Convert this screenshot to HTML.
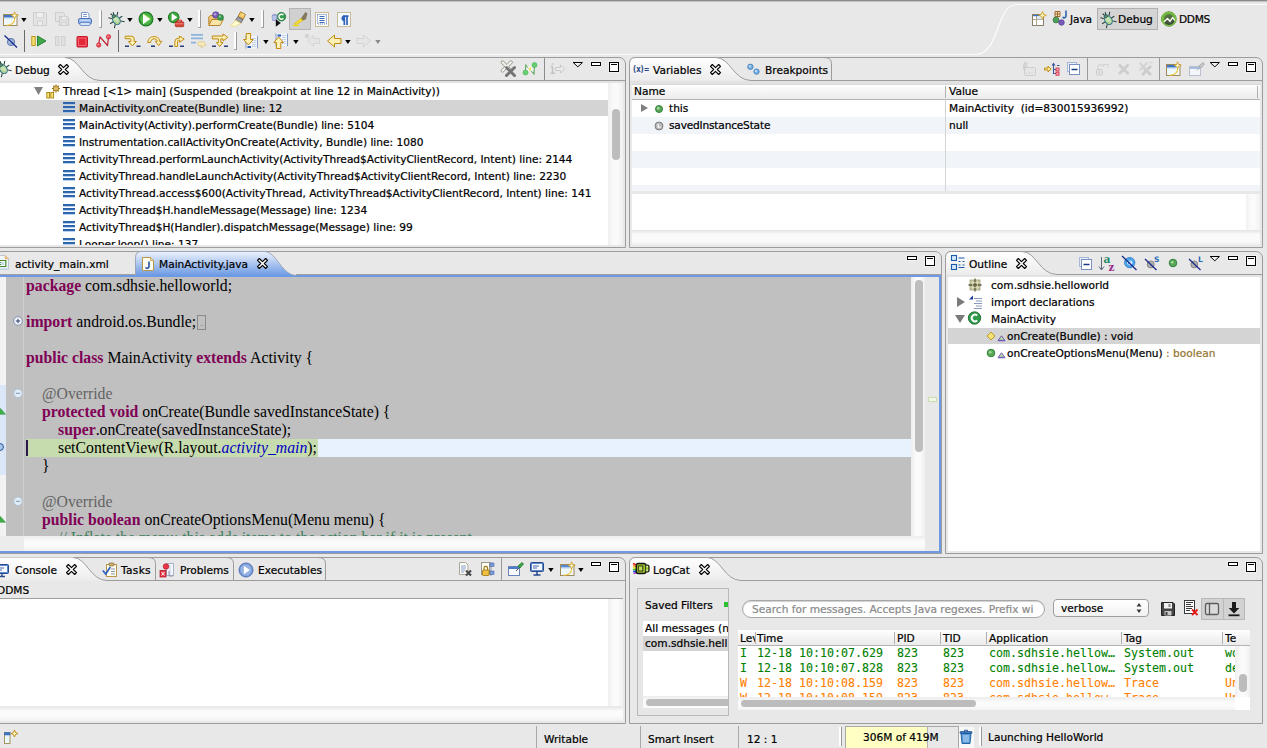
<!DOCTYPE html>
<html><head><meta charset="utf-8"><title>Debug - HelloWorld/src/com/sdhsie/helloworld/MainActivity.java - Eclipse</title>
<style>
*{box-sizing:border-box;margin:0;padding:0}
html,body{width:1267px;height:748px;overflow:hidden;background:#e8e8e8}
body{position:relative;font-family:"DejaVu Sans","Liberation Sans",sans-serif;font-size:10.6px;color:#000;line-height:17px;-webkit-text-stroke:.22px currentColor}
.p{position:absolute;border:1px solid #9c9c9c;background:#e8e8e8;border-radius:7px 7px 0 0}
.t{position:absolute;white-space:nowrap}
.ic{position:absolute;width:16px;height:16px;overflow:visible}
svg{position:absolute;overflow:visible}
.code{font-family:"Liberation Serif",serif;font-size:15.75px;line-height:18px;-webkit-text-stroke:0}
.code b{color:#7f0055}
.mono{font-family:"DejaVu Sans Mono","Liberation Mono",monospace;font-size:11.63px;line-height:15px;-webkit-text-stroke:.1px currentColor}
.hl{position:absolute;height:1px;background:#a8a8a8}
.vl{position:absolute;width:1px;background:#a8a8a8}
.g{color:#007f00}.o{color:#ff7f00}
</style></head><body>

<div class="t" style="left:0px;top:0px;width:1267px;height:1px;background:#8a8a8a"></div>
<div class="t" style="left:0px;top:1px;width:1267px;height:1px;background:#c4c4c4"></div>
<svg class="ic" style="left:3px;top:11px" viewBox="0 0 16 16" ><rect x=".5" y="3.500" width="13.500" height="11" fill="#eef8fd" stroke="#a08a58"/><rect x="1" y="4" width="9.500" height="2.400" fill="#3f74c4"/><path d="M1 6.900h9" stroke="#8ab0e8" stroke-width=".8"/><path d="M11.600 7.500C11.600 12 8 14 3.500 14.200" stroke="#f0c840" fill="none" stroke-width="1.100"/><path d="M11.600 .8l1 2.600 2.600 1-2.600 1-1 2.600-1-2.600-2.600-1 2.600-1z" fill="#fff8d0" stroke="#c89a18" stroke-width=".8" stroke-linejoin="round"/></svg>
<svg style="left:21px;top:18px;width:6px;height:4px" viewBox="0 0 6 4"><path d="M.2 0h5.400L2.900 3.900z" fill="#000"/></svg>
<svg class="ic" style="left:32px;top:11px" viewBox="0 0 16 16" ><path d="M1.500 1.500h12l1 1v12h-13z" fill="#e4e4e4" stroke="#cdcdcd"/><rect x="4.500" y="1.500" width="7" height="5.500" fill="#efefef" stroke="#d2d2d2"/><rect x="5.500" y="10" width="5" height="4.500" fill="#ececec" stroke="#d2d2d2"/></svg>
<svg class="ic" style="left:54px;top:11px" viewBox="0 0 16 16" ><path d="M1.500 1.500h8l1 1v8h-9z" fill="#e4e4e4" stroke="#cdcdcd"/><path d="M5.500 5.500h8l1 1v8h-9z" fill="#e2e2e2" stroke="#c9c9c9"/><rect x="7.500" y="5.500" width="5" height="3.500" fill="#eee" stroke="#d2d2d2"/><rect x="8" y="11.500" width="4" height="3" fill="#ececec" stroke="#d2d2d2"/></svg>
<svg class="ic" style="left:77px;top:11px" viewBox="0 0 16 16" ><path d="M4.500 1.500h6l1.500 1.500v4.500h-7.500z" fill="#fff" stroke="#7d98c8"/><path d="M6 3.500h4M6 5.500h4" stroke="#6f8fc8" stroke-width=".9"/><rect x="1.500" y="7.500" width="13" height="5.500" rx="1.500" fill="#8fb2e8" stroke="#4a72b8"/><rect x="3" y="11.500" width="10" height="3" rx=".8" fill="#d6e2f6" stroke="#5a80c0" stroke-width=".8"/><rect x="2.500" y="8.500" width="11" height="1.500" fill="#c4d7f4"/></svg>
<div class="t" style="left:99px;top:10px;width:3px;height:18px;background:#fdfdfd;border-right:1px solid #9a9a9a;border-bottom:1px solid #9a9a9a;border-radius:1px"></div>
<svg class="ic" style="left:108px;top:11px" viewBox="0 0 16 16" ><g transform="rotate(-32 8 8.500)"><path d="M2.500 3l3 3.200M13.500 3l-3 3.200M.8 9h3.500M11.700 9h3.500M2 15l3-3M14 15l-3-3M6.500 .8l1 2.700M9.500 .8l-1 2.700" stroke="#1c3a34" stroke-width="1" fill="none"/><ellipse cx="8" cy="9.300" rx="3.500" ry="4.600" fill="#b2d69a" stroke="#2a6a84" stroke-width="1"/><path d="M6 7.500l3.500 4M7.500 6.500l2.500 3" stroke="#d8ecc8" stroke-width=".9"/><ellipse cx="8" cy="4.600" rx="2" ry="1.400" fill="#5a8a70" stroke="#2a5a64" stroke-width=".7"/></g></svg>
<svg style="left:127px;top:18px;width:6px;height:4px" viewBox="0 0 6 4"><path d="M.2 0h5.400L2.900 3.900z" fill="#000"/></svg>
<svg class="ic" style="left:138px;top:11px" viewBox="0 0 16 16" ><circle cx="8" cy="8" r="6.900" fill="#3fa83f" stroke="#1f7a24" stroke-width="1.200"/><circle cx="8" cy="8" r="5" fill="#5cbf50" opacity=".7"/><path d="M5 2.800l7.300 5.200-7.300 5.200z" fill="#fff"/><path d="M5 2.800l7.300 5.200" stroke="#b8f060" stroke-width=".8"/></svg>
<svg style="left:157px;top:18px;width:6px;height:4px" viewBox="0 0 6 4"><path d="M.2 0h5.400L2.900 3.900z" fill="#000"/></svg>
<svg class="ic" style="left:168px;top:11px" viewBox="0 0 16 16" ><circle cx="5.700" cy="6.300" r="5.300" fill="#3fa83f" stroke="#1f7a24" stroke-width="1.100"/><path d="M3.600 2.300l5.800 4-5.800 4z" fill="#fff"/><rect x="7.300" y="10.800" width="8.400" height="4.900" rx=".9" fill="#d84434" stroke="#b02a20" stroke-width=".8"/><path d="M9.500 10.800v-1.500h4v1.500" fill="none" stroke="#c83a2c" stroke-width="1.100"/><path d="M7.500 12.800h8" stroke="#f0a098" stroke-width=".8"/></svg>
<svg style="left:187px;top:18px;width:6px;height:4px" viewBox="0 0 6 4"><path d="M.2 0h5.400L2.900 3.900z" fill="#000"/></svg>
<div class="t" style="left:198px;top:10px;width:3px;height:18px;background:#fdfdfd;border-right:1px solid #9a9a9a;border-bottom:1px solid #9a9a9a;border-radius:1px"></div>
<svg class="ic" style="left:208px;top:11px" viewBox="0 0 16 16" ><path d="M.8 13.500v-7.500l1.500-1.500h4l1.200 1.500h6v3" fill="#f0c878" stroke="#b07818" stroke-width=".9" stroke-linejoin="round"/><path d="M.8 14.500l3-6h11.500l-3.300 6z" fill="#fbe4a8" stroke="#b07818" stroke-width=".9" stroke-linejoin="round"/><circle cx="7.800" cy="4" r="3.300" fill="#7a5cb8" stroke="#56408c" stroke-width=".6"/><circle cx="7" cy="3.200" r="1.200" fill="#b4a0dc"/><circle cx="12.500" cy="6.400" r="3" fill="#3c9a52" stroke="#207034" stroke-width=".6"/><circle cx="11.800" cy="5.600" r="1" fill="#98d4a4"/></svg>
<svg class="ic" style="left:230px;top:11px" viewBox="0 0 16 16" ><path d="M10.500 .8l5 2.700-2.500 5-5-3z" fill="#f8c860" stroke="#9a6a18" stroke-width=".8" stroke-linejoin="round"/><path d="M12 2.500l1.800 1M11.300 3.800l1.800 1" stroke="#fff4c8" stroke-width=".7"/><path d="M8 5.500l5 3-2.200 3.800-5.300-3z" fill="#9a9aa0" stroke="#5c5c64" stroke-width=".8" stroke-linejoin="round"/><path d="M5.500 9.300l5.300 3-6.300 3.200-4-.5z" fill="#fffbd0" stroke="#e8d878" stroke-width=".7" stroke-linejoin="round"/></svg>
<svg style="left:249px;top:18px;width:6px;height:4px" viewBox="0 0 6 4"><path d="M.2 0h5.400L2.900 3.900z" fill="#000"/></svg>
<div class="t" style="left:261px;top:10px;width:3px;height:18px;background:#fdfdfd;border-right:1px solid #9a9a9a;border-bottom:1px solid #9a9a9a;border-radius:1px"></div>
<svg class="ic" style="left:271px;top:11px" viewBox="0 0 16 16" ><circle cx="10.400" cy="5.700" r="4.300" fill="#2f9a4a" stroke="#1a6a30" stroke-width=".7"/><path d="M12.400 4.100a2.500 2.500 0 1 0 0 3.200" fill="none" stroke="#fff" stroke-width="1.400"/><path d="M1 4.500h5l-.6 5h-3.800z" fill="#b8c4ec" stroke="#8090c8" stroke-width=".7"/><path d="M2 4.500v-1.200h3v1.200" fill="none" stroke="#8090c8" stroke-width=".8"/><path d="M4.800 8.300l5 3.700-5 3.800z" fill="#111"/></svg>
<div class="t" style="left:289px;top:8px;width:22px;height:22px;background:#d0d0d0;border:1px solid #b4b4b4"></div>
<svg class="ic" style="left:292px;top:11px" viewBox="0 0 16 16" ><path d="M13.500 1.500l1.500 1.200-1.500 5.300-3.500 1.500-1-1.500z" fill="#8a7a60" stroke="#6a5a48" stroke-width=".6"/><path d="M9 7.500l1.800 2-6.300 4-2.500-.5z" fill="#f8e030" stroke="#d8b800" stroke-width=".6"/><path d="M1 14.500h6" stroke="#f0d820" stroke-width="1.400"/></svg>
<svg class="ic" style="left:314px;top:11px" viewBox="0 0 16 16" ><rect x="1.500" y="1.500" width="13" height="14" fill="#fdfdf8" stroke="#c9bb98"/><rect x="3.500" y="3.500" width="9" height="9.500" fill="none" stroke="#3a68b8" stroke-width=".9" stroke-dasharray="1 1"/><path d="M5.500 5.500h5M5.500 7.500h5M5.500 9.500h5M5.500 11.500h5" stroke="#3a68b8" stroke-width="1.100"/></svg>
<svg class="ic" style="left:336px;top:11px" viewBox="0 0 16 16" ><rect x="1.500" y="1.500" width="13" height="14" fill="#f4f9fd" stroke="#c9bb98"/><path d="M8.300 5v9M11 5v9M7 5.200h5.500" stroke="#2f62b8" stroke-width="1.700" fill="none"/><path d="M8.300 4.400a2.800 2.800 0 0 0 0 5.600z" fill="#2f62b8"/></svg>
<svg class="ic" style="left:3px;top:33px" viewBox="0 0 16 16" ><circle cx="8" cy="9" r="3.600" fill="#9fb4d8" stroke="#5a78b0"/><circle cx="7" cy="8" r="1.300" fill="#dfe8f8"/><path d="M1.500 2.500l12.500 12" stroke="#1a2a8a" stroke-width="1.300"/></svg>
<div class="t" style="left:24px;top:30px;width:1px;height:22px;background:#6a6a6a"></div>
<svg class="ic" style="left:31px;top:33px" viewBox="0 0 16 16" ><rect x=".8" y="3.500" width="3.400" height="9" fill="#f8e070" stroke="#b89018" stroke-width=".9"/><path d="M6.500 3l8.500 5-8.500 5z" fill="#3fa848" stroke="#1f7a2c" stroke-width=".9"/></svg>
<svg class="ic" style="left:53px;top:33px" viewBox="0 0 16 16" ><rect x="2.500" y="3.500" width="3.500" height="9" fill="#e0e0e0" stroke="#d0d0d0"/><rect x="8.500" y="3.500" width="3.500" height="9" fill="#e0e0e0" stroke="#d0d0d0"/></svg>
<svg class="ic" style="left:75px;top:33px" viewBox="0 0 16 16" ><rect x="2" y="3.500" width="10.500" height="10.500" rx=".8" fill="#e42838" stroke="#c81828" stroke-width="1"/><rect x="3.500" y="5" width="7.500" height="7.500" fill="none" stroke="#f47888" stroke-width=".8"/></svg>
<svg class="ic" style="left:96px;top:33px" viewBox="0 0 16 16" ><path d="M2.500 12L4 3.800l7.500 8.700 1-8.500" fill="none" stroke="#c02030" stroke-width="1.200" stroke-linejoin="round"/><circle cx="2.700" cy="12" r="2.200" fill="#f04858" stroke="#c01828" stroke-width=".6"/><circle cx="12.500" cy="3.800" r="2.200" fill="#f04858" stroke="#c01828" stroke-width=".6"/><circle cx="2.200" cy="11.400" r=".7" fill="#fbb"/><circle cx="12" cy="3.200" r=".7" fill="#fbb"/></svg>
<div class="t" style="left:118px;top:30px;width:1px;height:22px;background:#6a6a6a"></div>
<svg class="ic" style="left:124px;top:33px" viewBox="0 0 16 16" ><path d="M1.200 3.200h6.200a2.800 2.800 0 0 1 2.800 2.800v2.500h2.200l-4 4.500-4-4.500h2.400v-2.200a.6 .6 0 0 0-.6-.6h-5z" fill="#fdf0b4" stroke="#c08a10" stroke-width="1" stroke-linejoin="round"/><path d="M1 13.200h4M12.500 13.200h4" stroke="#2a3f78" stroke-width="1.6"/></svg>
<svg class="ic" style="left:147px;top:33px" viewBox="0 0 16 16" ><path d="M.8 9.500C.8 1.800 12.600 1.800 12.600 8.300h2.300l-3.300 4.300-3.300-4.300h1.900C10.200 4.800 3.600 4.800 3.600 9.500z" fill="#fdf0b4" stroke="#c08a10" stroke-width="1" stroke-linejoin="round"/><path d="M4 13.200h4" stroke="#2a3f78" stroke-width="1.6"/></svg>
<svg class="ic" style="left:169px;top:33px" viewBox="0 0 16 16" ><path d="M5.800 13.500v-4.500a3.800 3.800 0 0 1 3.800-3.800h1v-2.200l4.600 3.100-4.600 3.100v-2h-.8a1.200 1.200 0 0 0-1.200 1.200v5.100z" fill="#fdf0b4" stroke="#c08a10" stroke-width="1" stroke-linejoin="round"/><path d="M0 13.200h4M11 13.200h4" stroke="#2a3f78" stroke-width="1.6"/></svg>
<svg class="ic" style="left:191px;top:33px" viewBox="0 0 16 16" ><path d="M0 1.800h12M0 5.400h12M0 9.600h5" stroke="#8ab4dc" stroke-width="1.800"/><path d="M6.500 10.500c1-2 3-2.300 4.500-1.200l1-1.300 2.800 4.200-4.800 2.300.6-2c-1.200-.6-2-.3-2.600 .6z" fill="#f8ecc0" stroke="#dcc078" stroke-width=".8" stroke-linejoin="round"/></svg>
<svg class="ic" style="left:212px;top:33px" viewBox="0 0 16 16" ><path d="M.3 3h10.700v-2.100l4.800 3.500-4.800 3.500v-2h-2.200v3.600h2.200l-3.300 4-3.300-4h2v-3.600h-6.100z" fill="#fdf0b4" stroke="#c08a10" stroke-width="1" stroke-linejoin="round"/><path d="M0 13.200h4M12 13.200h4" stroke="#2a3f78" stroke-width="1.6"/></svg>
<div class="t" style="left:234px;top:32px;width:3px;height:18px;background:#fdfdfd;border-right:1px solid #9a9a9a;border-bottom:1px solid #9a9a9a;border-radius:1px"></div>
<svg class="ic" style="left:243px;top:33px" viewBox="0 0 16 16" ><rect x="3" y="3" width="11.500" height="12.500" fill="#f2f6fc"/><path d="M14.500 3v12.500M3 3v12.500" stroke="#7a94c0" stroke-width=".9"/><path d="M9 5.500h4.500M9 7.500h4.500M9 9.500h4.500M9 11.500h4.500M9 13.500h4.500" stroke="#a8c0e0" stroke-width=".9" stroke-dasharray="1.500 .7"/><rect x="4.500" y="13" width="3.500" height="2" fill="#2a58b0"/><path d="M3.200 .5h4.400v6h2.600l-4.800 5.500-4.800-5.500h2.600z" fill="#fdf0b4" stroke="#c08a10" stroke-width="1" stroke-linejoin="round"/></svg>
<svg style="left:263px;top:40px;width:6px;height:4px" viewBox="0 0 6 4"><path d="M.2 0h5.400L2.900 3.900z" fill="#000"/></svg>
<svg class="ic" style="left:274px;top:33px" viewBox="0 0 16 16" ><rect x="2" y=".5" width="11.500" height="12.500" fill="#f2f6fc"/><path d="M13.500 .5v12.500M2 .5v12.500" stroke="#7a94c0" stroke-width=".9"/><path d="M8 2.500h4.500M8 4.500h4.500M8 6.500h4.500M8 8.500h4.500M8 10.500h4.500" stroke="#a8c0e0" stroke-width=".9" stroke-dasharray="1.500 .7"/><rect x="3.500" y="1.500" width="3.500" height="2" fill="#2a58b0"/><path d="M2.400 15.500h4.400v-6h2.600l-4.800-5.500-4.800 5.500h2.600z" fill="#fdf0b4" stroke="#c08a10" stroke-width="1" stroke-linejoin="round"/></svg>
<svg style="left:293px;top:40px;width:6px;height:4px" viewBox="0 0 6 4"><path d="M.2 0h5.400L2.900 3.900z" fill="#000"/></svg>
<svg class="ic" style="left:304px;top:33px" viewBox="0 0 16 16" ><path d="M15.500 5.500h-6v-3l-6 5.500 6 5.500v-3h6z" fill="#e4e4e4" stroke="#d2d2d2" stroke-width=".9" stroke-linejoin="round"/><path d="M1 1l4 4M5 1l-4 4M3 .5v5M.5 3h5" stroke="#c8c8c8" stroke-width=".7"/></svg>
<svg class="ic" style="left:326px;top:33px" viewBox="0 0 16 16" ><path d="M15 5.500h-6.500v-3.500l-7 6 7 6v-3.500h6.500z" fill="#fdf0b4" stroke="#c08a10" stroke-width="1" stroke-linejoin="round"/></svg>
<svg style="left:345px;top:40px;width:6px;height:4px" viewBox="0 0 6 4"><path d="M.2 0h5.400L2.900 3.900z" fill="#000"/></svg>
<svg class="ic" style="left:356px;top:33px" viewBox="0 0 16 16" ><path d="M1 5.500h6.500v-3.500l7 6-7 6v-3.500h-6.500z" fill="#e6e6e6" stroke="#d0d0d0" stroke-width=".9" stroke-linejoin="round"/></svg>
<svg style="left:375px;top:40px;width:6px;height:4px" viewBox="0 0 6 4"><path d="M.2 0h5.400L2.900 3.900z" fill="#8a8a8a"/></svg>
<svg style="left:0;top:0;width:1267px;height:748px" viewBox="0 0 1267 748"><path d="M0 54.500H976C992 54.500 996 30 1002 18C1006 9 1010 4.500 1018 4.500H1267" fill="none" stroke="#fbfbfb" stroke-width="1.200"/></svg>
<svg class="ic" style="left:1031px;top:11px" viewBox="0 0 16 16" ><rect x="1.500" y="3.500" width="11" height="11" fill="#fdfdfd" stroke="#8a8068"/><path d="M2 8.500h10.500M5.500 4v10.500" stroke="#b0a888" stroke-width="1"/><rect x="2" y="4" width="10" height="1.200" fill="#3f74c4"/><rect x="6" y="5.200" width="6" height="3" fill="#dce8f8"/><path d="M11.5 0.5l1.1 2.700 2.700 1.100-2.700 1.100-1.100 2.700-1.100-2.700-2.700-1.100 2.700-1.100z" fill="#fff4b8" stroke="#c89a18" stroke-width=".8" stroke-linejoin="round"/></svg>
<svg class="ic" style="left:1052px;top:10px" viewBox="0 0 16 16" ><path d="M3 1.500h5v5h-5zM5.500 1.500v5M3 4h5" fill="#f8e8b0" stroke="#9a5a28" stroke-width=".9"/><circle cx="4" cy="10" r="3" fill="#4f9f58" stroke="#2a6a34" stroke-width=".6"/><circle cx="9.500" cy="12.500" r="2.800" fill="#7a5ab8" stroke="#4a3488" stroke-width=".6"/><path d="M14 .5v5.500a1.800 1.800 0 0 1-3.300 1" fill="none" stroke="#2f62b0" stroke-width="1.600"/></svg>
<div class="t" style="left:1070px;top:11px;letter-spacing:-.1px">Java</div>
<div class="t" style="left:1097px;top:8px;width:61px;height:22px;background:#d4d4d4;border:1px solid #b0b0b0"></div>
<svg class="ic" style="left:1100px;top:11px" viewBox="0 0 16 16" ><g transform="rotate(-32 8 8.500)"><path d="M2.500 3l3 3.200M13.500 3l-3 3.200M.8 9h3.500M11.700 9h3.500M2 15l3-3M14 15l-3-3M6.500 .8l1 2.700M9.500 .8l-1 2.700" stroke="#1c3a34" stroke-width="1" fill="none"/><ellipse cx="8" cy="9.300" rx="3.500" ry="4.600" fill="#b2d69a" stroke="#2a6a84" stroke-width="1"/><path d="M6 7.500l3.500 4M7.500 6.500l2.500 3" stroke="#d8ecc8" stroke-width=".9"/><ellipse cx="8" cy="4.600" rx="2" ry="1.400" fill="#5a8a70" stroke="#2a5a64" stroke-width=".7"/></g></svg>
<div class="t" style="left:1118px;top:11px;">Debug</div>
<svg class="ic" style="left:1161px;top:11px" viewBox="0 0 16 16" ><circle cx="8" cy="8" r="7.200" fill="#3c4838" stroke="#4a7a2a" stroke-width=".8"/><path d="M8 .8a7.200 7.200 0 0 1 7.200 7.200c0 1-.2 2-.6 2.800l-3-3.500-2.600 3.500-2.500-2.800-4.800 4.500a7.200 7.200 0 0 1 6.300-11.700z" fill="#6aaa3a"/><circle cx="8" cy="8" r="4.600" fill="#4a5a44" opacity=".75"/><path d="M1.800 12l4.700-4.500 2.500 2.800 2.600-3.700 3 3.600" fill="none" stroke="#fafaf0" stroke-width="1.400"/><circle cx="8" cy="8" r="6.600" fill="none" stroke="#7ac048" stroke-width="1.400"/></svg>
<div class="t" style="left:1179px;top:11px;letter-spacing:-.3px">DDMS</div>
<div class="p" style="left:-8px;top:57px;width:634px;height:191px;"></div>
<svg style="left:0;top:0;width:1267px;height:748px" viewBox="0 0 1267 748"><defs><linearGradient id="tg1" x1="0" y1="0" x2="0" y2="1"><stop offset="0" stop-color="#ffffff"/><stop offset="1" stop-color="#ececec"/></linearGradient></defs><path d="M-8 80.5V57.5H65C79.0 57.5 82.8 80.5 100 80.5z" fill="url(#tg1)"/><path d="M65 57.5C79.0 57.5 82.8 80.5 100 80.5" fill="none" stroke="#9c9c9c"/></svg>
<div class="t" style="left:100px;top:80px;width:525px;height:1px;background:#9c9c9c"></div>
<div class="t" style="left:0px;top:81px;width:625px;height:2px;background:#e2e2e2"></div>
<svg class="ic" style="left:-5px;top:60px" viewBox="0 0 16 16" ><g transform="rotate(-32 8 8.500)"><path d="M2.500 3l3 3.200M13.500 3l-3 3.200M.8 9h3.500M11.700 9h3.500M2 15l3-3M14 15l-3-3M6.500 .8l1 2.700M9.500 .8l-1 2.700" stroke="#1c3a34" stroke-width="1" fill="none"/><ellipse cx="8" cy="9.300" rx="3.500" ry="4.600" fill="#b2d69a" stroke="#2a6a84" stroke-width="1"/><path d="M6 7.500l3.500 4M7.500 6.500l2.500 3" stroke="#d8ecc8" stroke-width=".9"/><ellipse cx="8" cy="4.600" rx="2" ry="1.400" fill="#5a8a70" stroke="#2a5a64" stroke-width=".7"/></g></svg>
<div class="t" style="left:15px;top:62px;">Debug</div>
<svg style="left:58px;top:64px;width:11px;height:11px" viewBox="0 0 11 11"><path d="M.5 2.300L2.300 .5 5.500 3.700 8.700 .5 10.500 2.300 7.300 5.500 10.500 8.700 8.700 10.500 5.500 7.300 2.300 10.500 .5 8.700 3.700 5.500z" fill="#fff" stroke="#000" stroke-width="1.150" stroke-linejoin="round"/></svg>
<svg class="ic" style="left:501px;top:61px" viewBox="0 0 16 16" ><path d="M1.500 1.200l8.500 8.500M10 1.200l-8.500 8.500" stroke="#9a9a90" stroke-width="3.600" stroke-linecap="round"/><path d="M1.500 1.200l8.500 8.500M10 1.200l-8.500 8.500" stroke="#f4f4f0" stroke-width="2" stroke-linecap="round"/><path d="M5.500 6.500l8 8M13.500 6.500l-8 8" stroke="#747474" stroke-width="3" stroke-linecap="round"/></svg>
<svg class="ic" style="left:523px;top:61px" viewBox="0 0 16 16" ><path d="M2.300 11.500L2.800 4l8.200 9 .5-8.500" fill="none" stroke="#5aa860" stroke-width="1.100"/><path d="M7 4.500v7M3.500 8h7M4.500 5.500l5 5M9.500 5.500l-5 5" stroke="#fafafa" stroke-width="1"/><path d="M7 5.800l1.500 2.200-1.500 2.200-1.500-2.200z" fill="#f0e860"/><circle cx="11.500" cy="4" r="2.500" fill="#68d070" stroke="#48b058" stroke-width=".6"/><circle cx="2.500" cy="11.500" r="2.500" fill="#68d070" stroke="#48b058" stroke-width=".6"/></svg>
<div class="t" style="left:544px;top:58px;width:1px;height:22px;background:#8c8c8c"></div>
<svg class="ic" style="left:549px;top:61px" viewBox="0 0 16 16" ><path d="M3.500 2.300v1.400M3.500 5.500v6.500M1.800 5.500h1.700M1.500 12.200h4.500" stroke="#c2c2c2" stroke-width="1.500" fill="none"/><path d="M6.500 6.500h5v-2.600l4 4.100-4 4.100v-2.600h-5z" fill="#ececec" stroke="#c6c6c6" stroke-width=".9"/></svg>
<svg style="left:572px;top:62px;width:11px;height:6px" viewBox="0 0 11 6"><path d="M1.200 .5h9.200L5.800 4.800z" fill="#f4f4f4" stroke="#000" stroke-width="1"/></svg>
<div class="t" style="left:591px;top:62px;width:10px;height:4px;border:1px solid #000;background:#fff;box-shadow:0 0 0 1px rgba(255,255,255,.35)"></div>
<div class="t" style="left:609px;top:62px;width:10px;height:10px;border:1px solid #000;background:#fff;box-shadow:0 0 0 1px rgba(255,255,255,.35)"></div><div class="t" style="left:611px;top:64px;width:6px;height:1px;background:#000"></div>
<div class="t" style="left:0px;top:83px;width:608px;height:162px;background:#fff"></div>
<div class="t" style="left:608px;top:83px;width:15px;height:162px;background:linear-gradient(90deg,#f0f0f0,#fafafa 40%,#fafafa 60%,#f0f0f0)"></div>
<div class="t" style="left:612px;top:109px;width:8px;height:51px;background:#bdbdbd;border-radius:4px"></div>
<div class="t" style="left:0px;top:100px;width:608px;height:16px;background:#d4d4d4"></div>
<svg style="left:34px;top:87px;width:9px;height:8px" viewBox="0 0 9 8"><path d="M0 0h9L4.500 8z" fill="#808080"/></svg>
<svg class="ic" style="left:46px;top:83px" viewBox="0 0 16 16" ><rect x=".8" y="9.500" width="2.800" height="5.500" fill="#f8e478" stroke="#a8820c" stroke-width=".9"/><rect x="4.800" y="9.500" width="2.800" height="5.500" fill="#f8e478" stroke="#a8820c" stroke-width=".9"/><circle cx="10" cy="5.500" r="2.600" fill="#f8dc80" stroke="#9a6a08" stroke-width="1"/><circle cx="10" cy="5.500" r="1" fill="#fff" stroke="#9a6a08" stroke-width=".6"/><path d="M10 1.500v1.300M10 8.200v1.300M6 5.500h1.300M12.700 5.500h1.300M7.200 2.700l.9 .9M11.900 7.400l.9 .9M12.800 2.700l-.9 .9M7.200 8.300l.9-.9" stroke="#9a6a08" stroke-width="1.100"/></svg>
<div class="t" style="left:63px;top:83px;">Thread [&lt;1&gt; main] (Suspended (breakpoint at line 12 in MainActivity))</div>
<div class="t" style="left:0;top:83px;width:608px;height:162px;overflow:hidden">
<svg class="ic" style="left:62px;top:17px" viewBox="0 0 16 16" ><path d="M1 3h12M1 7h12M1 11h12" stroke="#2a62a8" stroke-width="2"/><path d="M1 4.400h12M1 8.400h12M1 12.400h12" stroke="#9ac0e8" stroke-width=".8"/></svg>
<div class="t" style="left:79px;top:17px;">MainActivity.onCreate(Bundle) line: 12</div>
<svg class="ic" style="left:62px;top:34px" viewBox="0 0 16 16" ><path d="M1 3h12M1 7h12M1 11h12" stroke="#2a62a8" stroke-width="2"/><path d="M1 4.400h12M1 8.400h12M1 12.400h12" stroke="#9ac0e8" stroke-width=".8"/></svg>
<div class="t" style="left:79px;top:34px;">MainActivity(Activity).performCreate(Bundle) line: 5104</div>
<svg class="ic" style="left:62px;top:51px" viewBox="0 0 16 16" ><path d="M1 3h12M1 7h12M1 11h12" stroke="#2a62a8" stroke-width="2"/><path d="M1 4.400h12M1 8.400h12M1 12.400h12" stroke="#9ac0e8" stroke-width=".8"/></svg>
<div class="t" style="left:79px;top:51px;">Instrumentation.callActivityOnCreate(Activity, Bundle) line: 1080</div>
<svg class="ic" style="left:62px;top:68px" viewBox="0 0 16 16" ><path d="M1 3h12M1 7h12M1 11h12" stroke="#2a62a8" stroke-width="2"/><path d="M1 4.400h12M1 8.400h12M1 12.400h12" stroke="#9ac0e8" stroke-width=".8"/></svg>
<div class="t" style="left:79px;top:68px;">ActivityThread.performLaunchActivity(ActivityThread$ActivityClientRecord, Intent) line: 2144</div>
<svg class="ic" style="left:62px;top:85px" viewBox="0 0 16 16" ><path d="M1 3h12M1 7h12M1 11h12" stroke="#2a62a8" stroke-width="2"/><path d="M1 4.400h12M1 8.400h12M1 12.400h12" stroke="#9ac0e8" stroke-width=".8"/></svg>
<div class="t" style="left:79px;top:85px;">ActivityThread.handleLaunchActivity(ActivityThread$ActivityClientRecord, Intent) line: 2230</div>
<svg class="ic" style="left:62px;top:102px" viewBox="0 0 16 16" ><path d="M1 3h12M1 7h12M1 11h12" stroke="#2a62a8" stroke-width="2"/><path d="M1 4.400h12M1 8.400h12M1 12.400h12" stroke="#9ac0e8" stroke-width=".8"/></svg>
<div class="t" style="left:79px;top:102px;">ActivityThread.access$600(ActivityThread, ActivityThread$ActivityClientRecord, Intent) line: 141</div>
<svg class="ic" style="left:62px;top:119px" viewBox="0 0 16 16" ><path d="M1 3h12M1 7h12M1 11h12" stroke="#2a62a8" stroke-width="2"/><path d="M1 4.400h12M1 8.400h12M1 12.400h12" stroke="#9ac0e8" stroke-width=".8"/></svg>
<div class="t" style="left:79px;top:119px;">ActivityThread$H.handleMessage(Message) line: 1234</div>
<svg class="ic" style="left:62px;top:136px" viewBox="0 0 16 16" ><path d="M1 3h12M1 7h12M1 11h12" stroke="#2a62a8" stroke-width="2"/><path d="M1 4.400h12M1 8.400h12M1 12.400h12" stroke="#9ac0e8" stroke-width=".8"/></svg>
<div class="t" style="left:79px;top:136px;">ActivityThread$H(Handler).dispatchMessage(Message) line: 99</div>
<svg class="ic" style="left:62px;top:153px" viewBox="0 0 16 16" ><path d="M1 3h12M1 7h12M1 11h12" stroke="#2a62a8" stroke-width="2"/><path d="M1 4.400h12M1 8.400h12M1 12.400h12" stroke="#9ac0e8" stroke-width=".8"/></svg>
<div class="t" style="left:79px;top:153px;">Looper.loop() line: 137</div>
</div>
<div class="p" style="left:629px;top:57px;width:634px;height:191px;"></div>
<svg style="left:0;top:0;width:1267px;height:748px" viewBox="0 0 1267 748"><defs><linearGradient id="tg2" x1="0" y1="0" x2="0" y2="1"><stop offset="0" stop-color="#ffffff"/><stop offset="1" stop-color="#ececec"/></linearGradient></defs><path d="M629.5 80.5V63.5Q629.5 57.5 635.5 57.5H716C730.0 57.5 733.9 80.5 751 80.5z" fill="url(#tg2)"/><path d="M629.5 80.5V63.5Q629.5 57.5 635.5 57.5H716C730.0 57.5 733.9 80.5 751 80.5" fill="none" stroke="#9c9c9c"/></svg>
<div class="t" style="left:751px;top:80px;width:511px;height:1px;background:#9c9c9c"></div>
<svg style="left:0;top:0;width:1267px;height:748px" viewBox="0 0 1267 748"><path d="M824 57.5Q831.5 57.5 831.5 63.5V80.5" fill="none" stroke="#9c9c9c"/></svg>
<div class="t" style="left:630px;top:81px;width:632px;height:3px;background:#e2e2e2"></div>
<svg class="ic" style="left:633px;top:61px" viewBox="0 0 16 16" ><text x="0" y="11" font-family="DejaVu Sans,sans-serif" font-size="9.500" font-weight="bold" fill="#2a4a8a" textLength="16.500" lengthAdjust="spacingAndGlyphs">(x)=</text></svg>
<div class="t" style="left:653px;top:62px;">Variables</div>
<svg style="left:710px;top:64px;width:11px;height:11px" viewBox="0 0 11 11"><path d="M.5 2.300L2.300 .5 5.500 3.700 8.700 .5 10.500 2.300 7.300 5.500 10.500 8.700 8.700 10.500 5.500 7.300 2.300 10.500 .5 8.700 3.700 5.500z" fill="#fff" stroke="#000" stroke-width="1.150" stroke-linejoin="round"/></svg>
<svg class="ic" style="left:746px;top:61px" viewBox="0 0 16 16" ><circle cx="4.400" cy="5.800" r="2.700" fill="#7ab0e4" stroke="#3a78b8" stroke-width=".8"/><circle cx="3.800" cy="5.200" r="1" fill="#cfe4f8"/><circle cx="10.500" cy="10.600" r="2.700" fill="#7ab0e4" stroke="#3a78b8" stroke-width=".8"/><circle cx="9.900" cy="10" r="1" fill="#cfe4f8"/></svg>
<div class="t" style="left:765px;top:62px;">Breakpoints</div>
<svg class="ic" style="left:1021px;top:61px" viewBox="0 0 16 16" ><rect x="3.500" y="6.500" width="11" height="8" rx="1" fill="#e6e6e6" stroke="#cfcfcf"/><path d="M5.500 12h1M8 12h1M10.500 12h1" stroke="#c4c4c4"/><path d="M5 1c-3 3-3 6-1 9M6.500 2l-3 5 4-1" fill="none" stroke="#c8c8c8" stroke-width="1.100"/></svg>
<svg class="ic" style="left:1044px;top:61px" viewBox="0 0 16 16" ><path d="M.5 7h3.500v-1.800l3.200 2.800-3.200 2.800v-1.800h-3.500z" fill="#fce890" stroke="#b8860b" stroke-width=".9" stroke-linejoin="round"/><path d="M9.500 3v10M9.500 8.500h2.500M9.500 12.500h2.500M13 4.500h2.500" stroke="#3a5a9a" stroke-width="1.100" fill="none"/><path d="M7.500 4.500l2-3 2 3z" fill="#3a5a9a"/><rect x="12" y="7" width="3" height="3" fill="#f8b0b8" stroke="#d83048" stroke-width=".9"/><rect x="12" y="11.200" width="3" height="3" fill="#f8b0b8" stroke="#d83048" stroke-width=".9"/></svg>
<svg class="ic" style="left:1066px;top:61px" viewBox="0 0 16 16" ><rect x="1.500" y="1.500" width="9" height="9" fill="#eaf1fc" stroke="#a8b8d8"/><rect x="3.500" y="3.500" width="10" height="10" fill="#fff" stroke="#7a90c0"/><path d="M5.500 8.500h6" stroke="#1a3a8a" stroke-width="1.500"/></svg>
<div class="t" style="left:1087px;top:58px;width:1px;height:22px;background:#9a9a9a"></div>
<svg class="ic" style="left:1094px;top:61px" viewBox="0 0 16 16" ><rect x="2.500" y="8.500" width="6" height="5.500" rx="1" fill="#e2e2e2" stroke="#cccccc"/><path d="M4 8.500v-3a2 2 0 0 1 4 0M9 6v-2.500h5v2.500" fill="none" stroke="#d0d0d0" stroke-width="1"/><circle cx="5.500" cy="11" r="1" fill="#d0d0d0"/></svg>
<svg class="ic" style="left:1116px;top:61px" viewBox="0 0 16 16" ><path d="M3 3.500l9.500 9.500M12.500 3.500l-9.500 9.500" stroke="#cdcdcd" stroke-width="2.800"/></svg>
<svg class="ic" style="left:1138px;top:61px" viewBox="0 0 16 16" ><path d="M4 5l9 9M13 5l-9 9" stroke="#cbcbcb" stroke-width="2.600"/><path d="M1.500 1.500l8 8M9.500 1.500l-8 8" stroke="#d4d4d4" stroke-width="1.800"/><path d="M11 1.500h4M13 .5v3" stroke="#d4d4d4" stroke-width=".7"/></svg>
<div class="t" style="left:1159px;top:58px;width:1px;height:22px;background:#9a9a9a"></div>
<svg class="ic" style="left:1166px;top:61px" viewBox="0 0 16 16" ><rect x=".5" y="3.500" width="13.500" height="11" fill="#eef8fd" stroke="#a08a58"/><rect x="1" y="4" width="9.500" height="2.400" fill="#3f74c4"/><path d="M1 6.900h9" stroke="#8ab0e8" stroke-width=".8"/><path d="M11.600 7.500C11.600 12 8 14 3.500 14.200" stroke="#f0c840" fill="none" stroke-width="1.100"/><path d="M11.600 .8l1 2.600 2.600 1-2.600 1-1 2.600-1-2.600-2.600-1 2.600-1z" fill="#fff8d0" stroke="#c89a18" stroke-width=".8" stroke-linejoin="round"/></svg>
<svg class="ic" style="left:1189px;top:61px" viewBox="0 0 16 16" ><rect x=".5" y="5.500" width="11" height="9" fill="#f4f6fa" stroke="#b8c0d0"/><rect x="1" y="6" width="10" height="2" fill="#a8bce0"/><path d="M8 9.500l3-3M10 5l4-3.500 1.500 1.500-3.500 4z" fill="#c8c8c8" stroke="#a8a8a8" stroke-width=".9"/></svg>
<svg style="left:1209px;top:62px;width:11px;height:6px" viewBox="0 0 11 6"><path d="M1.200 .5h9.200L5.800 4.800z" fill="#f4f4f4" stroke="#000" stroke-width="1"/></svg>
<div class="t" style="left:1228px;top:62px;width:10px;height:4px;border:1px solid #000;background:#fff;box-shadow:0 0 0 1px rgba(255,255,255,.35)"></div>
<div class="t" style="left:1246px;top:62px;width:10px;height:10px;border:1px solid #000;background:#fff;box-shadow:0 0 0 1px rgba(255,255,255,.35)"></div><div class="t" style="left:1248px;top:64px;width:6px;height:1px;background:#000"></div>
<div class="t" style="left:632px;top:84px;width:628px;height:16px;background:linear-gradient(#ffffff,#f4f4f4 50%,#ececec);border-bottom:1px solid #b4b4b4;border-top:1px solid #d8d8d8"></div>
<div class="t" style="left:945px;top:86px;width:1px;height:12px;background:#b0b0b0"></div>
<div class="t" style="left:1257px;top:86px;width:1px;height:12px;background:#b0b0b0"></div>
<div class="t" style="left:634px;top:83px;">Name</div>
<div class="t" style="left:949px;top:83px;">Value</div>
<div class="t" style="left:632px;top:100px;width:628px;height:91px;background:#fff"></div>
<div class="t" style="left:632px;top:117px;width:628px;height:17px;background:#f1f5fa"></div>
<div class="t" style="left:632px;top:151px;width:628px;height:17px;background:#f1f5fa"></div>
<div class="t" style="left:632px;top:185px;width:628px;height:6px;background:#f1f5fa"></div>
<div class="t" style="left:945px;top:100px;width:1px;height:91px;background:#d4d4d4"></div>
<svg style="left:641px;top:104px;width:7px;height:8px" viewBox="0 0 7 8"><path d="M0 0v8L7 4z" fill="#808080"/></svg>
<svg class="ic" style="left:651px;top:100px" viewBox="0 0 16 16" ><circle cx="8" cy="9" r="3.500" fill="#58a858" stroke="#2a7a34" stroke-width=".9"/><circle cx="7.200" cy="8.200" r="1.300" fill="#b0dcaa"/></svg>
<div class="t" style="left:669px;top:100px;">this</div>
<div class="t" style="left:949px;top:100px;">MainActivity&nbsp;&nbsp;(id=830015936992)</div>
<svg class="ic" style="left:651px;top:118px" viewBox="0 0 16 16" ><circle cx="8" cy="8" r="4" fill="#b8b8b8" stroke="#787878" stroke-width=".9"/><path d="M7.200 5.800v3.400h2.400" fill="none" stroke="#fff" stroke-width="1.200"/></svg>
<div class="t" style="left:669px;top:117px;letter-spacing:-.19px">savedInstanceState</div>
<div class="t" style="left:949px;top:117px;">null</div>
<div class="t" style="left:632px;top:191px;width:628px;height:3px;background:#e8e8e8"></div>
<div class="t" style="left:632px;top:194px;width:614px;height:36px;background:#fff"></div>
<div class="t" style="left:1246px;top:194px;width:14px;height:36px;background:linear-gradient(90deg,#f2f2f2,#fbfbfb 40%,#fbfbfb 60%,#f2f2f2)"></div>
<div class="t" style="left:632px;top:230px;width:628px;height:15px;background:linear-gradient(#e4e4e4,#fafafa 30%,#fafafa 70%,#efefef)"></div>
<div class="p" style="left:-8px;top:251px;width:950px;height:303px;background:#e8e8e8"></div>
<div class="t" style="left:-8px;top:275px;width:949px;height:278px;border:2px solid #6c9ae4;border-top:2px solid #6c9ae4;background:#fff"></div>
<div class="t" style="left:296px;top:274px;width:645px;height:1px;background:#a2a09c"></div>
<div class="t" style="left:0px;top:274px;width:135px;height:1px;background:#a2a09c"></div>
<svg class="ic" style="left:-7px;top:255px" viewBox="0 0 16 16" ><path d="M3.500 .5h8.500l3.500 3.500v10.500h-12z" fill="#f4f9fd" stroke="#b8c4d4" stroke-width=".9"/><path d="M12 .5v3.500h3.500z" fill="#f8c890" stroke="#e0a868" stroke-width=".6"/><path d="M3.500 12.500h12v2h-12z" fill="#c8dcec" opacity=".7"/><path d="M7 5.500h5.800v6h-5.800M9.500 7.500h-2.500M9.500 9.500h-2.500" fill="none" stroke="#4a8a28" stroke-width="1.200"/><rect x="8" y="7" width="3" height="3" fill="#c8dcec"/></svg>
<div class="t" style="left:15px;top:256px;">activity_main.xml</div>
<svg style="left:0;top:0;width:1267px;height:748px" viewBox="0 0 1267 748"><defs><linearGradient id="tg3" x1="0" y1="0" x2="0" y2="1"><stop offset="0" stop-color="#eef3fc"/><stop offset="1" stop-color="#6c9ae4"/></linearGradient></defs><path d="M135.5 275.5V257.5Q135.5 251.5 141.5 251.5H264C277.2 251.5 280.8 275.5 297 275.5z" fill="url(#tg3)"/><path d="M135.5 275.5V257.5Q135.5 251.5 141.5 251.5H264C277.2 251.5 280.8 275.5 297 275.5" fill="none" stroke="#9aa6bc"/></svg>
<svg class="ic" style="left:140px;top:256px" viewBox="0 0 16 16" ><path d="M2.500 1.500h8l3 3v10h-11z" fill="#fffdf0" stroke="#b89848"/><path d="M10.500 1.500v3h3" fill="#f0e0a8" stroke="#b89848" stroke-width=".8"/><path d="M9 5.500v5a1.800 1.800 0 0 1-3.400 .8" fill="none" stroke="#2f5aa8" stroke-width="1.700"/></svg>
<div class="t" style="left:159px;top:256px;">MainActivity.java</div>
<svg style="left:257px;top:258px;width:11px;height:11px" viewBox="0 0 11 11"><path d="M.5 2.300L2.300 .5 5.500 3.700 8.700 .5 10.500 2.300 7.300 5.500 10.500 8.700 8.700 10.500 5.500 7.300 2.300 10.500 .5 8.700 3.700 5.500z" fill="#fff" stroke="#000" stroke-width="1.150" stroke-linejoin="round"/></svg>
<div class="t" style="left:907px;top:256px;width:10px;height:4px;border:1px solid #000;background:#fff;box-shadow:0 0 0 1px rgba(255,255,255,.35)"></div>
<div class="t" style="left:925px;top:256px;width:10px;height:10px;border:1px solid #000;background:#fff;box-shadow:0 0 0 1px rgba(255,255,255,.35)"></div><div class="t" style="left:927px;top:258px;width:6px;height:1px;background:#000"></div>
<div class="t" style="left:0px;top:277px;width:6px;height:259px;background:#f2f2f2"></div>
<div class="t" style="left:0px;top:385px;width:6px;height:90px;background:#dbe7f7"></div>
<div class="t" style="left:6px;top:277px;width:905px;height:259px;background:#c0c0c0"></div>
<div class="t" style="left:23px;top:277px;width:1px;height:259px;background:#d0d0d0"></div>
<div class="t" style="left:911px;top:277px;width:14px;height:259px;background:linear-gradient(90deg,#ededed,#fbfbfb 35%,#fbfbfb 65%,#efefef)"></div>
<div class="t" style="left:915px;top:280px;width:8px;height:172px;background:#bebebe;border-radius:4px"></div>
<div class="t" style="left:925px;top:277px;width:14px;height:274px;background:#e8e8e8"></div>
<div class="t" style="left:928px;top:397px;width:9px;height:5px;background:#f0f6e8;border:1px solid #c8deb0"></div>
<div class="t" style="left:0px;top:536px;width:24px;height:15px;background:#ececec"></div>
<div class="t" style="left:24px;top:536px;width:901px;height:15px;background:linear-gradient(#ededed,#fbfbfb 35%,#fbfbfb 65%,#f0f0f0)"></div>
<div class="t" style="left:26px;top:439px;width:885px;height:18px;background:#e8f2fe"></div>
<div class="t" style="left:26px;top:439px;width:292px;height:18px;background:#c6dbae"></div>
<div class="t" style="left:26px;top:440px;width:2px;height:16px;background:#2a1a4a"></div>
<svg style="left:0;top:405px;width:6px;height:10px" viewBox="0 0 6 10"><path d="M-3 9.300L.5 3.500l5 5.800z" fill="#3fae49" stroke="#2a8a34" stroke-width=".5"/></svg>
<svg style="left:0;top:513px;width:6px;height:10px" viewBox="0 0 6 10"><path d="M-3 9.300L.5 3.500l5 5.800z" fill="#3fae49" stroke="#2a8a34" stroke-width=".5"/></svg>
<svg style="left:0;top:442px;width:6px;height:10px" viewBox="0 0 6 10"><circle cx="0" cy="5" r="3.500" fill="#a8c4e8" stroke="#2a5a9a"/></svg>
<svg class="ic" style="left:10px;top:313px" viewBox="0 0 16 16" ><circle cx="8" cy="8" r="4.300" fill="#f4f6fa" stroke="#7a8ab0" stroke-width=".9"/><path d="M5.800 8h4.400M8 5.800v4.400" stroke="#2a3a6a" stroke-width="1"/></svg>
<svg class="ic" style="left:10px;top:385px" viewBox="0 0 16 16" ><circle cx="8" cy="8.300" r="4.300" fill="#e4ecf4" stroke="#a8c0d8" stroke-width=".9"/><path d="M5.800 8.300h4.400" stroke="#7a9ab8" stroke-width="1"/></svg>
<svg class="ic" style="left:10px;top:493px" viewBox="0 0 16 16" ><circle cx="8" cy="8.300" r="4.300" fill="#e4ecf4" stroke="#a8c0d8" stroke-width=".9"/><path d="M5.800 8.300h4.400" stroke="#7a9ab8" stroke-width="1"/></svg>
<div class="t code" style="left:26px;top:277px;width:885px;height:259px;overflow:hidden">
<div class="t" style="left:0;top:0px"><b>package</b> com.sdhsie.helloworld;</div>
<div class="t" style="left:0;top:36px"><b>import</b> android.os.Bundle;<span style="display:inline-block;width:9px;height:15px;border:1px solid #8a8a8a;vertical-align:-3px;margin-left:1px;font-size:8px;line-height:15px;color:#777;text-align:center;overflow:hidden">..</span></div>
<div class="t" style="left:0;top:72px"><b>public class</b> MainActivity <b>extends</b> Activity {</div>
<div class="t" style="left:0;top:108px"><span style="padding-left:16px;color:#646464">@Override</span></div>
<div class="t" style="left:0;top:126px"><span style="padding-left:16px"></span><b>protected void</b> onCreate(Bundle savedInstanceState) {</div>
<div class="t" style="left:0;top:144px"><span style="padding-left:32px"></span><b>super</b>.onCreate(savedInstanceState);</div>
<div class="t" style="left:0;top:162px"><span style="padding-left:32px"></span>setContentView(R.layout.<i style="color:#0000c0">activity_main</i>);</div>
<div class="t" style="left:0;top:180px"><span style="padding-left:16px"></span>}</div>
<div class="t" style="left:0;top:216px"><span style="padding-left:16px;color:#646464">@Override</span></div>
<div class="t" style="left:0;top:234px"><span style="padding-left:16px"></span><b>public boolean</b> onCreateOptionsMenu(Menu menu) {</div>
<div class="t" style="left:0;top:252px"><span style="padding-left:32px;color:#3f7f5f">// Inflate the menu; this adds items to the action bar if it is present.</span></div>
</div>
<div class="p" style="left:945px;top:251px;width:318px;height:303px;"></div>
<svg style="left:0;top:0;width:1267px;height:748px" viewBox="0 0 1267 748"><defs><linearGradient id="tg4" x1="0" y1="0" x2="0" y2="1"><stop offset="0" stop-color="#ffffff"/><stop offset="1" stop-color="#ececec"/></linearGradient></defs><path d="M945.5 274.5V257.5Q945.5 251.5 951.5 251.5H1022C1036.0 251.5 1039.8 274.5 1057 274.5z" fill="url(#tg4)"/><path d="M945.5 274.5V257.5Q945.5 251.5 951.5 251.5H1022C1036.0 251.5 1039.8 274.5 1057 274.5" fill="none" stroke="#9c9c9c"/></svg>
<div class="t" style="left:1057px;top:274px;width:205px;height:1px;background:#9c9c9c"></div>
<svg class="ic" style="left:950px;top:255px" viewBox="0 0 16 16" ><rect x="1.500" y=".5" width="5" height="5" fill="#d4e8f8" stroke="#1a5aa8" stroke-width="1.100"/><rect x="1.500" y="9.500" width="5" height="5" fill="#d4e8f8" stroke="#1a5aa8" stroke-width="1.100"/><path d="M8.500 3h6M8.500 6.500h2M12.500 6.500h2M8.500 10h2M12.500 10h2M8.500 12.500h6" stroke="#1a5aa8" stroke-width="1.100"/></svg>
<div class="t" style="left:969px;top:256px;">Outline</div>
<svg style="left:1016px;top:258px;width:11px;height:11px" viewBox="0 0 11 11"><path d="M.5 2.300L2.300 .5 5.500 3.700 8.700 .5 10.500 2.300 7.300 5.500 10.500 8.700 8.700 10.500 5.500 7.300 2.300 10.500 .5 8.700 3.700 5.500z" fill="#fff" stroke="#000" stroke-width="1.150" stroke-linejoin="round"/></svg>
<svg class="ic" style="left:1078px;top:256px" viewBox="0 0 16 16" ><rect x="1.500" y="1.500" width="9" height="9" fill="#eaf1fc" stroke="#a8b8d8"/><rect x="3.500" y="3.500" width="10" height="10" fill="#fff" stroke="#7a90c0"/><path d="M5.500 8.500h6" stroke="#1a3a8a" stroke-width="1.500"/></svg>
<svg class="ic" style="left:1098px;top:256px" viewBox="0 0 16 16" ><path d="M3.500 1v12.500M1 10.500l2.500 3.500 2.500-3.500" fill="none" stroke="#5a6a7a" stroke-width="1"/><text x="5.500" y="6.800" font-family="Liberation Serif,serif" font-size="13.500" font-weight="bold" fill="#1f8a6a">a</text><text x="10.500" y="14.500" font-family="Liberation Serif,serif" font-size="13.500" font-weight="bold" fill="#9a2a8a">z</text></svg>
<svg class="ic" style="left:1121px;top:256px" viewBox="0 0 16 16" ><circle cx="8.700" cy="6.600" r="5.200" fill="#4aa4e8" stroke="#2a78c8" stroke-width=".8"/><circle cx="8.700" cy="6.600" r="2.600" fill="#e4f2fc"/><path d="M7.500 4.500v4M7.500 4.800h2.500M7.500 6.500h2" stroke="#4aa4e8" stroke-width="1"/><path d="M1 0l14.500 14" stroke="#1a2a8a" stroke-width="1.300"/></svg>
<svg class="ic" style="left:1144px;top:256px" viewBox="0 0 16 16" ><circle cx="6.700" cy="8.400" r="3.500" fill="#b0b0b0" stroke="#808080" stroke-width=".9"/><path d="M1 3l11.500 11" stroke="#1a2a8a" stroke-width="1.300"/><text x="10" y="5.800" font-family="DejaVu Sans,sans-serif" font-size="7.500" font-weight="bold" fill="#2a6ab8">S</text></svg>
<svg class="ic" style="left:1165px;top:255px" viewBox="0 0 16 16" ><circle cx="8" cy="8" r="3.800" fill="#58a858" stroke="#2a7a34" stroke-width=".9"/><circle cx="7.200" cy="7.200" r="1.300" fill="#a8d8a0"/></svg>
<svg class="ic" style="left:1188px;top:256px" viewBox="0 0 16 16" ><circle cx="6.300" cy="8.400" r="3.500" fill="#b0b0b0" stroke="#808080" stroke-width=".9"/><path d="M1 3l11.500 11" stroke="#1a2a8a" stroke-width="1.300"/><text x="10" y="5.800" font-family="DejaVu Sans,sans-serif" font-size="7.500" font-weight="bold" fill="#2a6ab8">L</text></svg>
<svg style="left:1209px;top:256px;width:11px;height:6px" viewBox="0 0 11 6"><path d="M1.200 .5h9.200L5.800 4.800z" fill="#f4f4f4" stroke="#000" stroke-width="1"/></svg>
<div class="t" style="left:1228px;top:256px;width:10px;height:4px;border:1px solid #000;background:#fff;box-shadow:0 0 0 1px rgba(255,255,255,.35)"></div>
<div class="t" style="left:1246px;top:256px;width:10px;height:10px;border:1px solid #000;background:#fff;box-shadow:0 0 0 1px rgba(255,255,255,.35)"></div><div class="t" style="left:1248px;top:258px;width:6px;height:1px;background:#000"></div>
<div class="t" style="left:946px;top:275px;width:316px;height:2px;background:#e3e3e3"></div>
<div class="t" style="left:948px;top:277px;width:312px;height:274px;background:#fff"></div>
<div class="t" style="left:948px;top:328px;width:312px;height:16px;background:#d4d4d4"></div>
<svg class="ic" style="left:967px;top:277px" viewBox="0 0 16 16" ><rect x="3" y="3" width="10" height="10" fill="#c4c49c" stroke="#a0a078" stroke-width=".8"/><path d="M8 1.500v13M1.500 8h13" stroke="#5c5c3c" stroke-width="1.300"/><path d="M5.500 3.500v9M10.500 3.500v9M3.500 5.500h9M3.500 10.500h9" stroke="#e4e4c8" stroke-width=".8" opacity=".8"/></svg>
<div class="t" style="left:991px;top:277px;">com.sdhsie.helloworld</div>
<svg style="left:957px;top:297px;width:8px;height:10px" viewBox="0 0 8 10"><path d="M0 0v10L8 5z" fill="#7a7a7a"/></svg>
<svg class="ic" style="left:968px;top:294px" viewBox="0 0 16 16" ><path d="M6 4.500h8M8 7h6M6 9.500h8M8 12h6M6 14.500h8" stroke="#8a9ab8" stroke-width="1"/><path d="M1 5.500l4-4v4z" fill="#1a3a9a"/></svg>
<div class="t" style="left:991px;top:294px;">import declarations</div>
<svg style="left:955px;top:315px;width:10px;height:8px" viewBox="0 0 10 8"><path d="M0 0h10L5 8z" fill="#7a7a7a"/></svg>
<svg class="ic" style="left:966px;top:310px" viewBox="0 0 16 16" ><circle cx="8.500" cy="8" r="6.200" fill="#2f9a4a" stroke="#1a6a30" stroke-width=".9"/><path d="M11.200 5.500a3.300 3.300 0 1 0 0 5" fill="none" stroke="#fff" stroke-width="1.900"/></svg>
<div class="t" style="left:991px;top:311px;">MainActivity</div>
<svg class="ic" style="left:983px;top:328px" viewBox="0 0 16 16" ><path d="M8 4l4 4-4 4-4-4z" fill="#f8e078" stroke="#b8901c" stroke-width=".9"/></svg>
<svg class="ic" style="left:997px;top:328px" viewBox="0 0 16 16" ><path d="M1.300 12.300l3.200-4.500 3.200 4.500z" fill="#b8e0a0" stroke="#6a48b8" stroke-width=".9" stroke-linejoin="round"/><path d="M.8 12.800h7.400" stroke="#6a48b8" stroke-width=".8"/></svg>
<div class="t" style="left:1007px;top:328px;">onCreate(Bundle) : void</div>
<svg class="ic" style="left:983px;top:345px" viewBox="0 0 16 16" ><circle cx="8" cy="8" r="3.800" fill="#58a858" stroke="#2a7a34" stroke-width=".9"/><circle cx="7.200" cy="7.200" r="1.300" fill="#a8d8a0"/></svg>
<svg class="ic" style="left:997px;top:345px" viewBox="0 0 16 16" ><path d="M1.300 12.300l3.200-4.500 3.200 4.500z" fill="#b8e0a0" stroke="#6a48b8" stroke-width=".9" stroke-linejoin="round"/><path d="M.8 12.800h7.400" stroke="#6a48b8" stroke-width=".8"/></svg>
<div class="t" style="left:1007px;top:345px;">onCreateOptionsMenu(Menu) <span style="color:#95762f">: boolean</span></div>
<div class="p" style="left:-8px;top:557px;width:634px;height:167px;"></div>
<svg style="left:0;top:0;width:1267px;height:748px" viewBox="0 0 1267 748"><defs><linearGradient id="tg5" x1="0" y1="0" x2="0" y2="1"><stop offset="0" stop-color="#ffffff"/><stop offset="1" stop-color="#ececec"/></linearGradient></defs><path d="M-8 580.5V557.5H73C86.6 557.5 90.3 580.5 107 580.5z" fill="url(#tg5)"/><path d="M73 557.5C86.6 557.5 90.3 580.5 107 580.5" fill="none" stroke="#9c9c9c"/></svg>
<div class="t" style="left:107px;top:580px;width:518px;height:1px;background:#9c9c9c"></div>
<svg style="left:0;top:0;width:1267px;height:748px" viewBox="0 0 1267 748"><path d="M148 557.5Q155.5 557.5 155.5 563.5V580.5" fill="none" stroke="#9c9c9c"/></svg>
<svg style="left:0;top:0;width:1267px;height:748px" viewBox="0 0 1267 748"><path d="M226 557.5Q233.5 557.5 233.5 563.5V580.5" fill="none" stroke="#9c9c9c"/></svg>
<svg style="left:0;top:0;width:1267px;height:748px" viewBox="0 0 1267 748"><path d="M318 557.5Q325.5 557.5 325.5 563.5V580.5" fill="none" stroke="#9c9c9c"/></svg>
<svg class="ic" style="left:-6px;top:562px" viewBox="0 0 16 16" ><rect x="1.500" y="2.500" width="13" height="9" rx="1" fill="#5a88d0" stroke="#2a4a8a"/><rect x="3" y="4" width="10" height="6" fill="#f4f8ff"/><path d="M4 6h6M4 8h4" stroke="#3a5a9a" stroke-width=".9"/><path d="M5 14.500h6M8 11.500v3" stroke="#2a4a8a" stroke-width="1.400"/></svg>
<div class="t" style="left:15px;top:562px;">Console</div>
<svg style="left:66px;top:564px;width:11px;height:11px" viewBox="0 0 11 11"><path d="M.5 2.300L2.300 .5 5.500 3.700 8.700 .5 10.500 2.300 7.300 5.500 10.500 8.700 8.700 10.500 5.500 7.300 2.300 10.500 .5 8.700 3.700 5.500z" fill="#fff" stroke="#000" stroke-width="1.150" stroke-linejoin="round"/></svg>
<svg class="ic" style="left:102px;top:562px" viewBox="0 0 16 16" ><rect x="4.500" y="2.500" width="10" height="12" fill="#fffdf0" stroke="#b89848"/><rect x="7" y="1" width="5" height="3" rx="1" fill="#c8b078" stroke="#8a6a28" stroke-width=".7"/><path d="M9 7h4M9 9.500h4M9 12h4" stroke="#7a8ab0" stroke-width=".9"/><path d="M.8 8.500l3 3.500 4.500-7" fill="none" stroke="#2f62c0" stroke-width="1.700"/></svg>
<div class="t" style="left:121px;top:562px;letter-spacing:.3px">Tasks</div>
<svg class="ic" style="left:159px;top:562px" viewBox="0 0 16 16" ><rect x="7.500" y="1.500" width="7" height="12" fill="#f4f6fb" stroke="#a8b4c8"/><path d="M11 3v10" stroke="#c8d0e0"/><circle cx="7" cy="4.500" r="2.800" fill="#e83848" stroke="#a81020" stroke-width=".6"/><rect x="1" y="8.500" width="6" height="6.500" fill="#e83848" stroke="#a81020" stroke-width=".7"/><path d="M2.500 10l3 3.500M5.500 10l-3 3.500" stroke="#fff" stroke-width="1"/><path d="M10 9v5h4" fill="none" stroke="#8a98b0" stroke-width="1"/></svg>
<div class="t" style="left:180px;top:562px;">Problems</div>
<svg class="ic" style="left:238px;top:562px" viewBox="0 0 16 16" ><circle cx="8" cy="8" r="7" fill="#7a9ad8" stroke="#4a6ab0" stroke-width=".9"/><circle cx="8" cy="8" r="5.500" fill="#a0bce8" opacity=".7"/><path d="M5.800 3.800l6 4.200-6 4.200z" fill="#fff"/></svg>
<div class="t" style="left:258px;top:562px;">Executables</div>
<svg class="ic" style="left:457px;top:561px" viewBox="0 0 16 16" ><path d="M2.500 1.500h6l2.500 2.500v9.500h-8.500z" fill="#fdfdf6" stroke="#a8a898"/><path d="M4 5h5M4 7h5M4 9h4M4 11h3" stroke="#7a94c8" stroke-width=".9"/><path d="M9 9.500l5 5M14 9.500l-5 5" stroke="#4a4a4a" stroke-width="2.200"/></svg>
<svg class="ic" style="left:479px;top:561px" viewBox="0 0 16 16" ><rect x="2.500" y="1.500" width="8" height="12" fill="#fdfdf6" stroke="#9a9a8a"/><path d="M12 1v14" stroke="#9a9a9a"/><rect x="11" y="2" width="4" height="3.500" fill="#7a9ad8" stroke="#4a6ab0" stroke-width=".6"/><rect x="11" y="10" width="4" height="3.500" fill="#7a9ad8" stroke="#4a6ab0" stroke-width=".6"/><rect x="3.500" y="9" width="6.500" height="5.500" rx=".8" fill="#f0c040" stroke="#9a7408" stroke-width=".8"/><path d="M5 9v-1.800a1.800 1.800 0 0 1 3.600 0v1.800" fill="none" stroke="#9a7408" stroke-width="1.100"/></svg>
<div class="t" style="left:501px;top:558px;width:1px;height:22px;background:#9a9a9a"></div>
<svg class="ic" style="left:508px;top:561px" viewBox="0 0 16 16" ><rect x=".5" y="5.500" width="11" height="9" fill="#f8fafd" stroke="#6a84b8"/><rect x="1" y="6" width="10" height="2" fill="#4a7ac8"/><path d="M8 10l3-3" stroke="#555" stroke-width="1"/><path d="M10 5l4-3.500 1.500 1.500-3.500 4z" fill="#3fa848" stroke="#1f7a2c" stroke-width=".8"/></svg>
<svg class="ic" style="left:529px;top:561px" viewBox="0 0 16 16" ><rect x="1.500" y="1.500" width="13" height="9" rx="1" fill="#5a88d0" stroke="#2a4a8a"/><rect x="3" y="3" width="10" height="6" fill="#f4f8ff"/><path d="M4 5h6M4 7h4" stroke="#3a5a9a" stroke-width=".9"/><path d="M4.500 14h7M8 10.500v3.500" stroke="#2a4a8a" stroke-width="1.500"/></svg>
<svg style="left:548px;top:568px;width:6px;height:4px" viewBox="0 0 6 4"><path d="M.2 0h5.400L2.900 3.900z" fill="#000"/></svg>
<svg class="ic" style="left:560px;top:561px" viewBox="0 0 16 16" ><rect x=".5" y="3.500" width="13.500" height="11" fill="#eef8fd" stroke="#a08a58"/><rect x="1" y="4" width="9.500" height="2.400" fill="#5a88d0"/><path d="M1 6.900h9" stroke="#a8c4ec" stroke-width=".8"/><path d="M11.600 7.500C11.600 12 8 14 3.500 14.200" stroke="#f0c840" fill="none" stroke-width="1.100"/><path d="M11.600 .8l1 2.600 2.600 1-2.600 1-1 2.600-1-2.600-2.600-1 2.600-1z" fill="#fff8d0" stroke="#c89a18" stroke-width=".8" stroke-linejoin="round"/></svg>
<svg style="left:578px;top:568px;width:6px;height:4px" viewBox="0 0 6 4"><path d="M.2 0h5.400L2.900 3.900z" fill="#000"/></svg>
<div class="t" style="left:591px;top:562px;width:10px;height:4px;border:1px solid #000;background:#fff;box-shadow:0 0 0 1px rgba(255,255,255,.35)"></div>
<div class="t" style="left:609px;top:562px;width:10px;height:10px;border:1px solid #000;background:#fff;box-shadow:0 0 0 1px rgba(255,255,255,.35)"></div><div class="t" style="left:611px;top:564px;width:6px;height:1px;background:#000"></div>
<div class="t" style="left:-3px;top:582px;">DDMS</div>
<div class="t" style="left:0px;top:598px;width:623px;height:1px;background:#a0a0a0"></div>
<div class="t" style="left:0px;top:599px;width:608px;height:107px;background:#fff"></div>
<div class="t" style="left:608px;top:599px;width:15px;height:107px;background:linear-gradient(90deg,#f0f0f0,#fbfbfb 40%,#fbfbfb 60%,#f0f0f0)"></div>
<div class="t" style="left:0px;top:706px;width:623px;height:15px;background:linear-gradient(#e6e6e6,#fbfbfb 35%,#fbfbfb 65%,#f0f0f0)"></div>
<div class="p" style="left:629px;top:557px;width:634px;height:167px;"></div>
<svg style="left:0;top:0;width:1267px;height:748px" viewBox="0 0 1267 748"><defs><linearGradient id="tg6" x1="0" y1="0" x2="0" y2="1"><stop offset="0" stop-color="#ffffff"/><stop offset="1" stop-color="#ececec"/></linearGradient></defs><path d="M629.5 580.5V563.5Q629.5 557.5 635.5 557.5H707C720.6 557.5 724.3 580.5 741 580.5z" fill="url(#tg6)"/><path d="M629.5 580.5V563.5Q629.5 557.5 635.5 557.5H707C720.6 557.5 724.3 580.5 741 580.5" fill="none" stroke="#9c9c9c"/></svg>
<div class="t" style="left:741px;top:580px;width:521px;height:1px;background:#9c9c9c"></div>
<svg class="ic" style="left:633px;top:561px" viewBox="0 0 16 16" ><path d="M0 2.500l3.500 1.500" stroke="#e82020" stroke-width="1.600"/><path d="M0 4.500l3 1.200" stroke="#f89020" stroke-width="1.600"/><path d="M0 6.500l3 1" stroke="#f0e020" stroke-width="1.600"/><path d="M0 8.500l3 .5" stroke="#28c028" stroke-width="1.600"/><path d="M0 10.500l3-.2" stroke="#2858e8" stroke-width="1.600"/><path d="M.5 12.500l3-1" stroke="#9030c8" stroke-width="1.600"/><rect x="3.300" y="2.500" width="9.500" height="10" rx="2" fill="#98c030" stroke="#141414" stroke-width="1.400"/><rect x="5.300" y="5" width="4.500" height="5" fill="#c0dc58" stroke="#2a2a1a" stroke-width=".9"/><path d="M12.800 4h1.700a1.500 1.500 0 0 1 1.500 1.500v4a1.500 1.500 0 0 1-1.500 1.500h-1.700" fill="#98c030" stroke="#141414" stroke-width="1.200"/><circle cx="14.200" cy="5.800" r=".7" fill="#fff"/><circle cx="14.200" cy="9.200" r=".7" fill="#fff"/></svg>
<div class="t" style="left:653px;top:562px;">LogCat</div>
<svg style="left:699px;top:564px;width:11px;height:11px" viewBox="0 0 11 11"><path d="M.5 2.300L2.300 .5 5.500 3.700 8.700 .5 10.500 2.300 7.300 5.500 10.500 8.700 8.700 10.500 5.500 7.300 2.300 10.500 .5 8.700 3.700 5.500z" fill="#fff" stroke="#000" stroke-width="1.150" stroke-linejoin="round"/></svg>
<div class="t" style="left:1228px;top:562px;width:10px;height:4px;border:1px solid #000;background:#fff;box-shadow:0 0 0 1px rgba(255,255,255,.35)"></div>
<div class="t" style="left:1246px;top:562px;width:10px;height:10px;border:1px solid #000;background:#fff;box-shadow:0 0 0 1px rgba(255,255,255,.35)"></div><div class="t" style="left:1248px;top:564px;width:6px;height:1px;background:#000"></div>
<div class="t" style="left:637px;top:588px;width:92px;height:128px;border:1px solid #b9b9b9;background:#e6e6e6"></div>
<div class="t" style="left:645px;top:597px;">Saved Filters</div>
<div class="t" style="left:724px;top:602px;width:4px;height:5px;background:#2fc02f"></div>
<div class="t" style="left:643px;top:621px;width:85px;height:75px;background:#fff"></div>
<div class="t" style="left:645px;top:620px;width:83px;overflow:hidden">All messages (n</div>
<div class="t" style="left:643px;top:636px;width:85px;height:15px;background:#d4d4d4"></div>
<div class="t" style="left:645px;top:635px;width:83px;overflow:hidden">com.sdhsie.hell</div>
<div class="t" style="left:643px;top:696px;width:85px;height:12px;background:linear-gradient(#ececec,#fbfbfb 40%,#fbfbfb)"></div>
<div class="t" style="left:646px;top:699px;width:82px;height:7px;background:#bcbcbc;border-radius:4px 0 0 4px"></div>
<div class="t" style="left:742px;top:600px;width:303px;height:18px;background:#fff;border:1px solid #a6a6a6;border-radius:9px;box-shadow:inset 0 1px 1px #d0d0d0"></div>
<div class="t" style="left:752px;top:601px;color:#8a8a8a;width:286px;overflow:hidden">Search for messages. Accepts Java regexes. Prefix wi</div>
<div class="t" style="left:1053px;top:599px;width:96px;height:18px;background:linear-gradient(#ffffff,#f2f2f2);border:1px solid #9e9e9e;border-radius:4px"></div>
<div class="t" style="left:1061px;top:600px;">verbose</div>
<svg style="left:1136px;top:603px;width:6px;height:10px" viewBox="0 0 6 10"><path d="M3 0l2.500 3.500h-5zM3 10l2.500-3.500h-5z" fill="#3a3a3a"/></svg>
<svg class="ic" style="left:1160px;top:601px" viewBox="0 0 16 16" ><path d="M1.500 1.500h11.500l1.500 1.500v11.500h-13z" fill="#444" stroke="#222"/><rect x="4" y="2" width="8" height="5.500" fill="#f0f0f0"/><rect x="8.500" y="3" width="2" height="3" fill="#888"/><rect x="4.500" y="10" width="7" height="4.500" fill="#c8c8c8"/><rect x="5.500" y="11" width="2" height="3" fill="#444"/></svg>
<svg class="ic" style="left:1183px;top:600px" viewBox="0 0 16 16" ><rect x="1.500" y=".5" width="10" height="13" fill="#fdfdfd" stroke="#3a3a3a"/><path d="M3 2.500h7M3 4.500h5M3 6.500h7M3 8.500h6M3 10.500h4" stroke="#3a3a3a" stroke-width="1"/><path d="M9 9.500l5.500 5.500M14.500 9.500l-5.500 5.500" stroke="#e81818" stroke-width="1.800"/></svg>
<div class="t" style="left:1201px;top:598px;width:44px;height:22px;background:#d2d2d2;border:1px solid #b8b8b8"></div>
<div class="t" style="left:1223px;top:599px;width:1px;height:20px;background:#b8b8b8"></div>
<svg class="ic" style="left:1204px;top:601px" viewBox="0 0 16 16" ><rect x="1.500" y="2.500" width="13" height="11" rx="1.500" fill="#dadada" stroke="#5c5c5c" stroke-width="1.300"/><path d="M5.500 2.500v11" stroke="#5c5c5c" stroke-width="1.300"/></svg>
<svg class="ic" style="left:1226px;top:601px" viewBox="0 0 16 16" ><path d="M6 1h4v6h3.300l-5.300 5.500-5.300-5.500h3.300z" fill="#1a1a1a"/><path d="M2.500 14.300h11" stroke="#1a1a1a" stroke-width="1.800"/></svg>
<div class="t" style="left:738px;top:630px;width:512px;height:80px;background:#fff"></div>
<div class="t" style="left:738px;top:630px;width:512px;height:16px;background:linear-gradient(#ffffff,#f4f4f4 50%,#ececec);border-bottom:1px solid #b4b4b4"></div>
<div class="t" style="left:740px;top:630px;max-width:15px;overflow:hidden">Lev</div>
<div class="t" style="left:757px;top:630px;">Time</div>
<div class="t" style="left:897px;top:630px;">PID</div>
<div class="t" style="left:943px;top:630px;">TID</div>
<div class="t" style="left:989px;top:630px;">Application</div>
<div class="t" style="left:1124px;top:630px;">Tag</div>
<div class="t" style="left:1225px;top:630px;max-width:12px;overflow:hidden">Te</div>
<div class="t" style="left:755px;top:632px;width:1px;height:12px;background:#b0b0b0"></div>
<div class="t" style="left:894px;top:632px;width:1px;height:12px;background:#b0b0b0"></div>
<div class="t" style="left:940px;top:632px;width:1px;height:12px;background:#b0b0b0"></div>
<div class="t" style="left:986px;top:632px;width:1px;height:12px;background:#b0b0b0"></div>
<div class="t" style="left:1121px;top:632px;width:1px;height:12px;background:#b0b0b0"></div>
<div class="t" style="left:1222px;top:632px;width:1px;height:12px;background:#b0b0b0"></div>
<div class="t mono" style="left:738px;top:646px;width:497px;height:51px;overflow:hidden">
<div class="t g" style="left:2px;top:0px">I</div>
<div class="t g" style="left:19px;top:0px">12-18 10:10:07.629</div>
<div class="t g" style="left:159px;top:0px">823</div>
<div class="t g" style="left:205px;top:0px">823</div>
<div class="t g" style="left:251px;top:0px">com.sdhsie.hellow…</div>
<div class="t g" style="left:386px;top:0px">System.out</div>
<div class="t g" style="left:487px;top:0px">wo</div>
<div class="t g" style="left:2px;top:15px">I</div>
<div class="t g" style="left:19px;top:15px">12-18 10:10:07.828</div>
<div class="t g" style="left:159px;top:15px">823</div>
<div class="t g" style="left:205px;top:15px">823</div>
<div class="t g" style="left:251px;top:15px">com.sdhsie.hellow…</div>
<div class="t g" style="left:386px;top:15px">System.out</div>
<div class="t g" style="left:487px;top:15px">de</div>
<div class="t o" style="left:2px;top:30px">W</div>
<div class="t o" style="left:19px;top:30px">12-18 10:10:08.159</div>
<div class="t o" style="left:159px;top:30px">823</div>
<div class="t o" style="left:205px;top:30px">823</div>
<div class="t o" style="left:251px;top:30px">com.sdhsie.hellow…</div>
<div class="t o" style="left:386px;top:30px">Trace</div>
<div class="t o" style="left:487px;top:30px">Un</div>
<div class="t o" style="left:2px;top:45px">W</div>
<div class="t o" style="left:19px;top:45px">12-18 10:10:08.159</div>
<div class="t o" style="left:159px;top:45px">823</div>
<div class="t o" style="left:205px;top:45px">823</div>
<div class="t o" style="left:251px;top:45px">com.sdhsie.hellow…</div>
<div class="t o" style="left:386px;top:45px">Trace</div>
<div class="t o" style="left:487px;top:45px">Un</div>
</div>
<div class="t" style="left:1235px;top:646px;width:15px;height:51px;background:linear-gradient(90deg,#f0f0f0,#fbfbfb 40%,#fbfbfb 60%,#f0f0f0)"></div>
<div class="t" style="left:1239px;top:674px;width:8px;height:18px;background:#bcbcbc;border-radius:4px"></div>
<div class="t" style="left:738px;top:697px;width:497px;height:13px;background:linear-gradient(#ececec,#fbfbfb 40%,#fbfbfb 70%,#f2f2f2)"></div>
<div class="t" style="left:741px;top:700px;width:235px;height:7px;background:#bcbcbc;border-radius:4px"></div>
<svg class="ic" style="left:0px;top:728px" viewBox="0 0 16 16" ><rect x="4.500" y="4.500" width="5.500" height="11" fill="#e8f8fd" stroke="#a89460"/><rect x="4.500" y="4.500" width="5.500" height="2.500" fill="#3a78c4" stroke="#3a6ab0" stroke-width=".5"/><path d="M14.500 2l1 2.500 2.500 1-2.500 1-1 2.500-1-2.500-2.500-1 2.500-1z" fill="#fff6c0" stroke="#b88a10" stroke-width=".9" stroke-linejoin="round"/></svg>
<div class="t" style="left:536px;top:726px;width:1px;height:22px;background:#a8a8a8"></div>
<div class="t" style="left:640px;top:726px;width:1px;height:22px;background:#a8a8a8"></div>
<div class="t" style="left:738px;top:726px;width:1px;height:22px;background:#a8a8a8"></div>
<div class="t" style="left:544px;top:731px;">Writable</div>
<div class="t" style="left:648px;top:731px;">Smart Insert</div>
<div class="t" style="left:747px;top:731px;">12 : 1</div>
<div class="t" style="left:839px;top:727px;width:3px;height:19px;background:#fdfdfd;border-right:1px solid #9a9a9a"></div>
<div class="t" style="left:845px;top:726px;width:114px;height:24px;background:linear-gradient(90deg,#ffffc4 82px,#e8e8e8 82px);border:1px solid #a8a8a8"></div>
<div class="t" style="left:927px;top:727px;width:1px;height:22px;background:#b4b4b4"></div>
<div class="t" style="left:863px;top:729px;">306M of 419M</div>
<div class="t" style="left:959px;top:727px;width:15px;height:21px;background:#f8f8f8"></div>
<svg class="ic" style="left:958px;top:729px" viewBox="0 0 16 16" ><path d="M3 4.500h10l-1 10h-8z" fill="#5a9ad8" stroke="#1a5a9a" stroke-width=".9"/><path d="M6 6v7M8 6v7M10 6v7" stroke="#c8e0f8" stroke-width=".9"/><rect x="2" y="2.500" width="12" height="2" rx=".8" fill="#3a7ac0" stroke="#1a4a8a" stroke-width=".7"/><path d="M6.500 2.500v-1.300h3v1.300" fill="none" stroke="#1a4a8a" stroke-width=".9"/></svg>
<div class="t" style="left:979px;top:727px;width:3px;height:19px;background:#fdfdfd;border-right:1px solid #9a9a9a"></div>
<div class="t" style="left:988px;top:729px;">Launching HelloWorld</div>
</body></html>
